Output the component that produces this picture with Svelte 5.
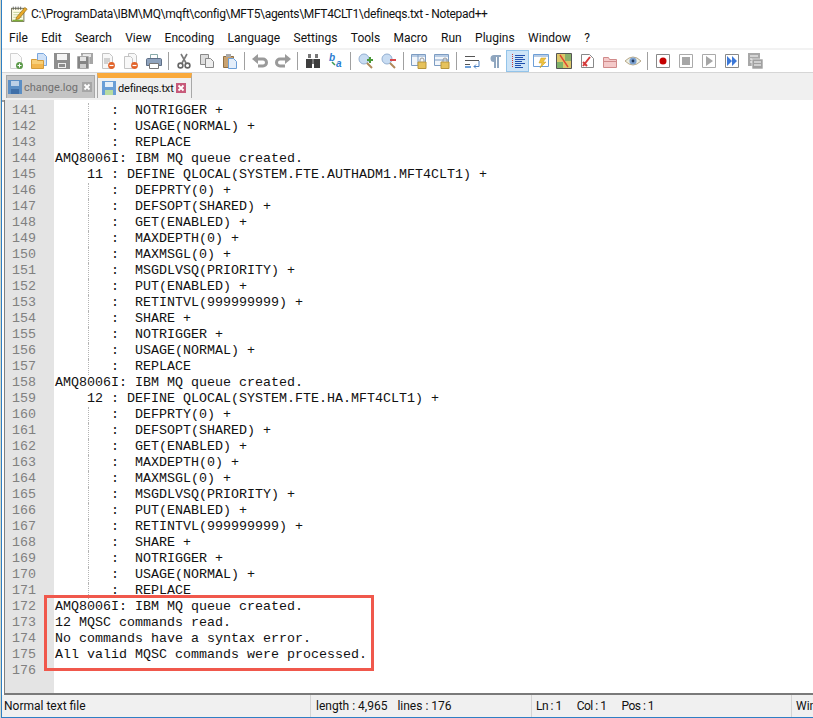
<script>
  const menus = ["File","Edit","Search","View","Encoding","Language","Settings","Tools","Macro","Run","Plugins","Window","?"];

  const tail = ["NOTRIGGER +","USAGE(NORMAL) +","REPLACE"];
  const params = ["DEFPRTY(0) +","DEFSOPT(SHARED) +","GET(ENABLED) +","MAXDEPTH(0) +","MAXMSGL(0) +","MSGDLVSQ(PRIORITY) +","PUT(ENABLED) +","RETINTVL(999999999) +","SHARE +"];
  const created = "AMQ8006I: IBM MQ queue created.";
  const item = (s) => "       :  " + s;

  const text = [
    ...tail.map(item),
    created,
    "    11 : DEFINE QLOCAL(SYSTEM.FTE.AUTHADM1.MFT4CLT1) +",
    ...params.map(item),
    ...tail.map(item),
    created,
    "    12 : DEFINE QLOCAL(SYSTEM.FTE.HA.MFT4CLT1) +",
    ...params.map(item),
    ...tail.map(item),
    created,
    "12 MQSC commands read.",
    "No commands have a syntax error.",
    "All valid MQSC commands were processed.",
    ""
  ];
  const lines = text.map((t, i) => ({ n: 141 + i, t, guide: t.startsWith("       :") }));
</script>

<div class="window">
  <div class="title">
    <svg viewBox="0 0 22 22">
      <rect x="2" y="4" width="15" height="16" fill="#fffde8" stroke="#5a5a3c"/>
      <path d="M4 2v4M7 2v4M10 2v4M13 2v4" stroke="#555"/>
      <path d="M4 9h11M4 12h11M4 15h11" stroke="#b8c88a"/>
      <path d="M8 15 18 3l3 2-10 12-4 1z" fill="#e8a92a" stroke="#7a5a10" stroke-width=".7"/>
      <path d="M3 19h13" stroke="#7fae3a" stroke-width="2"/>
    </svg>
    <span>C:\ProgramData\IBM\MQ\mqft\config\MFT5\agents\MFT4CLT1\defineqs.txt - Notepad++</span>
  </div>

  <div class="menu">
    {#each menus as m}<span>{m}</span>{/each}
  </div>

  <div class="toolbar">
    <div class="btn"><svg viewBox="0 0 16 16"><path d="M2.5.5h7l4 4v11h-11z" fill="#fafafa" stroke="#d0d0d0"/><circle cx="11.5" cy="12.5" r="3.5" fill="#5c9a4a"/><path d="M9.5 12.5h4M11.5 10.5v4" stroke="#fff"/></svg></div>
    <div class="btn"><svg viewBox="0 0 16 16"><path d="M6.5.5h6l3 3v9h-9z" fill="#cfe1f7" stroke="#7aa7de"/><path d="M.5 6.5h5l1 1h6v8H.5z" fill="#f8cf78" stroke="#d39b3a"/><path d="M1 11h11v4H1z" fill="#f2b64e"/></svg></div>
    <div class="btn"><svg viewBox="0 0 16 16"><path d="M0 0h16v16H0z" fill="#8e8e8e"/><path d="M3 1h10v6H3z" fill="#f4f4f4"/><path d="M4 10h8v5H4z" fill="#f0f0f0"/><path d="M5 11h6v3H5z" fill="#8e8e8e"/></svg></div>
    <div class="btn"><svg viewBox="0 0 16 16"><path d="M4 0h12v11H4z" fill="#a6a6a6"/><path d="M6 1h8v3H6z" fill="#e5e5e5"/><path d="M0 3h12v13H0z" fill="#858585" stroke="#fff" stroke-width=".6"/><path d="M3 4h6v4H3z" fill="#e5e5e5"/><path d="M3 11h6v4H3z" fill="#cfcfcf"/></svg></div>
    <div class="btn"><svg viewBox="0 0 16 16"><path d="M2.5.5h7l3 3v12h-10z" fill="#f8f8f8" stroke="#c4c4c4"/><path d="M4 6h6M4 8h6M4 10h4" stroke="#aaa"/><circle cx="11.5" cy="12.5" r="3.4" fill="#e2632a"/><path d="M9.5 12.5h4" stroke="#fff" stroke-width="1.2"/></svg></div>
    <div class="btn"><svg viewBox="0 0 16 16"><path d="M5.5.5h6l2 2v9h-8z" fill="#f8f8f8" stroke="#c4c4c4"/><path d="M1.5 3.5h6l2 2v10h-8z" fill="#f8f8f8" stroke="#c4c4c4"/><circle cx="11.5" cy="12.5" r="3.4" fill="#e2632a"/><path d="M9.5 12.5h4" stroke="#fff" stroke-width="1.2"/></svg></div>
    <div class="btn"><svg viewBox="0 0 16 16"><path d="M4.5 1.5h7v5h-7z" fill="#fff" stroke="#8aa"/><path d="M.5 6.5c0-1 1-1 1-1h13s1 0 1 1v6h-15z" fill="#8fa3bd" stroke="#5f6f86"/><path d="M3.5 10.5h9v5h-9z" fill="#fff" stroke="#777"/></svg></div>
    <div class="sep"></div>
    <div class="btn"><svg viewBox="0 0 16 16"><path d="M11 1 6 10M5 1l5 9" stroke="#7a7a7a" stroke-width="1.6" fill="none"/><circle cx="4.5" cy="12.5" r="2.4" fill="none" stroke="#666" stroke-width="1.6"/><circle cx="11.5" cy="12.5" r="2.4" fill="none" stroke="#666" stroke-width="1.6"/></svg></div>
    <div class="btn"><svg viewBox="0 0 16 16"><path d="M1.5 1.5h8v10h-8z" fill="#ddd" stroke="#888"/><path d="M6.5 5.5h5l3 3v6h-8z" fill="#eee" stroke="#888"/></svg></div>
    <div class="btn"><svg viewBox="0 0 16 16"><path d="M1.5 3.5h10v11h-10z" fill="#c9a270" stroke="#8e6f45"/><path d="M4 1h5v3H4z" fill="#aaa"/><path d="M6.5 5.5h5l3 3v7h-8z" fill="#e4eefa" stroke="#6d9fd8"/></svg></div>
    <div class="sep"></div>
    <div class="btn"><svg viewBox="0 0 16 16"><path d="M5 6h6a3.5 3.5 0 0 1 0 7H6" fill="none" stroke="#9a9a9a" stroke-width="3"/><path d="M6 1v10L0 6z" fill="#9a9a9a"/></svg></div>
    <div class="btn"><svg viewBox="0 0 16 16"><path d="M11 6H5a3.5 3.5 0 0 0 0 7h5" fill="none" stroke="#9a9a9a" stroke-width="3"/><path d="M10 1v10l6-5z" fill="#9a9a9a"/></svg></div>
    <div class="sep"></div>
    <div class="btn"><svg viewBox="0 0 16 16"><path d="M3 1h3v4H3zM10 1h3v4h-3z" fill="#777"/><path d="M1 6h6v9H1zM9 6h6v9H9z" fill="#3e3e3e"/><path d="M7 6h2v5H7z" fill="#777"/></svg></div>
    <div class="btn"><svg viewBox="0 0 16 16"><text x="1" y="8" class="rep">b</text><text x="8" y="14" class="rep">a</text><path d="M4 9l3 3" stroke="#3d9a52" stroke-width="1.5"/></svg></div>
    <div class="sep"></div>
    <div class="btn"><svg viewBox="0 0 16 16"><circle cx="6" cy="6" r="5" fill="#c8dcf2" stroke="#94b0d2"/><path d="M9 10l5 5" stroke="#b08a5a" stroke-width="2"/><path d="M9 7h6M12 4v6" stroke="#4a9a3a" stroke-width="2"/></svg></div>
    <div class="btn"><svg viewBox="0 0 16 16"><circle cx="6" cy="6" r="5" fill="#c8dcf2" stroke="#94b0d2"/><path d="M9 10l5 5" stroke="#b08a5a" stroke-width="2"/><path d="M9 7h6" stroke="#d8474a" stroke-width="2"/></svg></div>
    <div class="sep"></div>
    <div class="btn"><svg viewBox="0 0 16 16"><path d="M.5 1.5h14v11H.5z" fill="#f2f6fb" stroke="#7d9cc2"/><path d="M1 2h13v2H1z" fill="#b8cce4"/><path d="M7 1v11" stroke="#7d9cc2"/><path d="M7 9h8v6.5H7z" fill="#e6c25c" stroke="#b8953a"/><path d="M9 9V7a2 2 0 0 1 4 0v2" fill="none" stroke="#999"/></svg></div>
    <div class="btn"><svg viewBox="0 0 16 16"><path d="M.5 1.5h14v11H.5z" fill="#f2f6fb" stroke="#7d9cc2"/><path d="M1 2h13v2H1z" fill="#b8cce4"/><path d="M1 7h13" stroke="#7d9cc2"/><path d="M7 9h8v6.5H7z" fill="#e6c25c" stroke="#b8953a"/><path d="M9 9V7a2 2 0 0 1 4 0v2" fill="none" stroke="#999"/></svg></div>
    <div class="sep"></div>
    <div class="btn"><svg viewBox="0 0 16 16"><path d="M1 3.5h10M1 7.5h14M1 11.5h5" stroke="#555" fill="none"/><path d="M1 14h6" stroke="#6d9fd8" stroke-width="2"/><path d="M15 8v5.5H10m2-2-2 2 2 2" stroke="#4a7fc0" fill="none"/></svg></div>
    <div class="btn"><svg viewBox="0 0 16 16"><path d="M7 2h7v2h-2v11h-2V4H9v11H7V9a3.5 3.5 0 0 1 0-7z" fill="#8fa6bf"/></svg></div>
    <div class="btn on"><svg viewBox="0 0 16 16"><path d="M5 2.5h10M5 4.5h8M5 6.5h10M5 8.5h7M5 10.5h10M5 12.5h6M5 14.5h8" stroke="#1f4fae" fill="none"/><path d="M2.5 1v14" stroke="#cc3a3a" stroke-dasharray="1 1"/></svg></div>
    <div class="btn"><svg viewBox="0 0 16 16"><path d="M.5 1.5h15v12H.5z" fill="#fff" stroke="#6d9fd8"/><path d="M1 2h14v2H1z" fill="#b8cce4"/><path d="M8 5h5l-3 4h3l-6 6 2-5H6z" fill="#efc23f" stroke="#c79a20" stroke-width=".5"/></svg></div>
    <div class="btn"><svg viewBox="0 0 16 16"><path d="M.5.5h15v15H.5z" fill="#dcc76a" stroke="#555"/><path d="M9 1h6v7H9z" fill="#8ab06a"/><path d="M1 9h6v6H1z" fill="#7fb26a"/><path d="M4 2l8 12" stroke="#e0492f" stroke-width="1.4"/></svg></div>
    <div class="btn"><svg viewBox="0 0 16 16"><path d="M2.5 1.5h8l4 4v9h-12z" fill="#fff" stroke="#888"/><path d="M4 13 11 4M4 9l4 4" stroke="#d53a3a" stroke-width="2"/></svg></div>
    <div class="btn"><svg viewBox="0 0 16 16"><path d="M1.5 4.5h5l1 2h7v8h-13z" fill="#f4c9c9" stroke="#d08a8a"/><path d="M2 8.5h12" stroke="#d08a8a"/></svg></div>
    <div class="btn"><svg viewBox="0 0 16 16"><path d="M0 8q8-8 16 0-8 8-16 0z" fill="#eef0e4" stroke="#b8a98a"/><circle cx="8" cy="8" r="3.6" fill="#7ba0d0"/><circle cx="8" cy="8" r="1.4" fill="#1f3557"/></svg></div>
    <div class="sep"></div>
    <div class="btn"><svg viewBox="0 0 16 16"><path d="M1.5 1.5h13v13h-13z" fill="#fff" stroke="#888"/><circle cx="8" cy="8" r="3.5" fill="#c40000"/></svg></div>
    <div class="btn"><svg viewBox="0 0 16 16"><path d="M1.5 1.5h13v13h-13z" fill="#fff" stroke="#aaa"/><path d="M4 4h8v8H4z" fill="#a6a6a6"/></svg></div>
    <div class="btn"><svg viewBox="0 0 16 16"><path d="M1.5 1.5h13v13h-13z" fill="#fff" stroke="#aaa"/><path d="M5 3l7 5-7 5z" fill="#a6a6a6"/></svg></div>
    <div class="btn"><svg viewBox="0 0 16 16"><path d="M1.5 1.5h13v13h-13z" fill="#fff" stroke="#888"/><path d="M3 3l5 5-5 5zM8 3l5 5-5 5z" fill="#3c78d8"/></svg></div>
    <div class="btn"><svg viewBox="0 0 16 16"><path d="M1 0h12v13H1z" fill="#a8a8a8"/><path d="M5 6h11v10H5z" fill="#a0a0a0" stroke="#fff" stroke-width=".6"/><path d="M3 3h8M3 6h2M3 9h2M7 9h7M7 12h7" stroke="#fff" stroke-width="1.2"/></svg></div>
  </div>

  <div class="tabs">
    <div class="tab">
      <svg viewBox="0 0 16 16"><path d="M1 1h14v14H1z" fill="#5b8ec4"/><path d="M4 2h8v5H4z" fill="#bcd0e6"/><path d="M4 10h8v5H4z" fill="#3f6fa8"/></svg>
      <span>change.log</span>
      <i class="x off"><svg viewBox="0 0 10 10"><path d="M2.5 2.5l5 5M7.5 2.5l-5 5" stroke="#fff" stroke-width="1.8"/></svg></i>
    </div>
    <div class="tab active">
      <svg viewBox="0 0 16 16"><path d="M1 1h14v14H1z" fill="#6a9ed6"/><path d="M4 2h8v5H4z" fill="#e6eff8"/><path d="M4 10h8v5H4z" fill="#b9dca0"/></svg>
      <span>defineqs.txt</span>
      <i class="x"><svg viewBox="0 0 10 10"><path d="M2.5 2.5l5 5M7.5 2.5l-5 5" stroke="#fff" stroke-width="1.8"/></svg></i>
    </div>
  </div>

  <div class="editor">
    <div class="gutter">
      {#each lines as l}<div>{l.n}</div>{/each}
    </div>
    <div class="code">
      {#each lines as l}<div class="row" class:guide={l.guide}>{l.t}</div>{/each}
      <div class="mark"></div>
    </div>
  </div>

  <div class="status">
    <div class="cell first">Normal text file</div>
    <div class="cell size"><span>length : 4,965</span><span>lines : 176</span></div>
    <div class="cell pos"><span>Ln : 1</span><span>Col : 1</span><span>Pos : 1</span></div>
    <div class="cell last">Windows (CR LF)</div>
  </div>
</div>

<style>
  :global(body) {
    margin: 0;
    overflow: hidden;
    background: #d8d8c8;
  }

  .window {
    width: 812px;
    height: 718px;
    margin-left: 1px;
    display: flex;
    flex-direction: column;
    overflow: hidden;
    background: #fff;
    box-sizing: border-box;
    border-left: 1px solid #2f7fc4;
    border-bottom: 1px solid #2f7fc4;
    font-family: Roboto, "Liberation Sans", sans-serif;
    font-size: 12px;
    color: #111;
  }

  .title {
    height: 28px;
    flex: none;
    display: flex;
    align-items: center;
    gap: 3px;
    padding-left: 8px;
    white-space: nowrap;
    letter-spacing: -.32px;
  }

  .title svg {
    width: 18px;
    height: 18px;
    flex: none;
  }

  .menu {
    height: 20px;
    flex: none;
    display: flex;
    align-items: center;
    gap: 13.4px;
    padding-left: 7px;
  }

  .toolbar {
    height: 25px;
    flex: none;
    box-sizing: border-box;
    display: flex;
    align-items: center;
    padding-left: 2px;
    background: #fff;
    border-top: 2px solid #f2f2f2;
    border-bottom: 1px solid #d6d6d6;
  }

  .btn {
    width: 23px;
    height: 22px;
    box-sizing: border-box;
    flex: none;
    display: flex;
    align-items: center;
    justify-content: center;
  }

  .btn svg {
    width: 16px;
    height: 16px;
  }

  .btn.on {
    background: #cde4f7;
    border: 1px solid #93c4ea;
  }

  .rep {
    font-family: "Liberation Sans", sans-serif;
    font-size: 10px;
    font-style: italic;
    font-weight: 700;
    fill: #2b7bd0;
  }

  .sep {
    width: 1px;
    height: 18px;
    flex: none;
    margin: 0 3px;
    background: #a0a0a0;
  }

  .tabs {
    height: 25px;
    flex: none;
    display: flex;
    align-items: flex-end;
    gap: 2px;
    padding: 0 0 2px 4px;
    background: #f0f0f0;
    border-bottom: 2px solid #a0a0a0;
    box-sizing: content-box;
    margin-bottom: -2px;
    font-size: 11px;
  }

  .tab {
    width: 89px;
    height: 23px;
    flex: none;
    box-sizing: border-box;
    display: flex;
    align-items: center;
    gap: 1px;
    padding-left: 0;
    background: #c4c4c4;
    color: #6f6f6f;
    border: 1px solid #a8a8a8;
    border-bottom: none;
  }

  .tab > svg {
    width: 16px;
    height: 16px;
    flex: none;
  }

  .tab span {
    flex: 1;
  }

  .tab.active {
    width: 95px;
    height: 25px;
    background: #f0f0f0;
    color: #111;
    border-top: 5px solid #faaa3c;
    padding-left: 3px;
    letter-spacing: -.2px;
  }

  .x {
    width: 10px;
    height: 10px;
    margin-right: 2px;
    background: #c75a7a;
    display: block;
    flex: none;
  }

  .active .x {
    margin-right: 5px;
  }

  .x.off {
    background: #a6a6a6;
  }

  .x svg {
    display: block;
    width: 10px;
    height: 10px;
  }

  .editor {
    flex: 1;
    min-height: 0;
    display: flex;
    overflow: hidden;
    margin-left: 2px;
    border-left: 1px solid #808080;
    border-bottom: 2px solid #7a7a7a;
    font-family: "Liberation Mono", monospace;
    font-size: 13.33px;
    line-height: 16px;
    background: #fff;
  }

  .gutter {
    width: 49px;
    flex: none;
    box-sizing: border-box;
    padding: 3px 0 0 7px;
    background: #e4e4e4;
    color: #808080;
  }

  .code {
    flex: 1;
    position: relative;
    padding: 3px 0 0 1px;
    color: #111;
  }

  .row {
    height: 16px;
    position: relative;
    white-space: pre;
  }

  .row.guide::before {
    content: "";
    position: absolute;
    left: 33px;
    top: 0;
    bottom: 0;
    border-left: 1px dotted #b4b4b4;
  }

  .mark {
    position: absolute;
    left: -10px;
    top: 495px;
    width: 324px;
    height: 70px;
    border: 3px solid #f0584c;
  }

  .status {
    height: 22px;
    flex: none;
    box-sizing: border-box;
    display: flex;
    align-items: center;
    background: #f0f0f0;
    white-space: nowrap;
  }

  .cell {
    height: 100%;
    flex: none;
    box-sizing: border-box;
    display: flex;
    align-items: center;
    border-right: 1px solid #d4d4d4;
  }

  .first {
    width: 309px;
    padding-left: 2px;
  }

  .size {
    width: 221px;
    padding-left: 5px;
    gap: 10px;
  }

  .pos {
    width: 260px;
    padding-left: 4px;
    gap: 15px;
    letter-spacing: -.5px;
  }

  .last {
    padding-left: 4px;
    border: none;
  }
</style>
